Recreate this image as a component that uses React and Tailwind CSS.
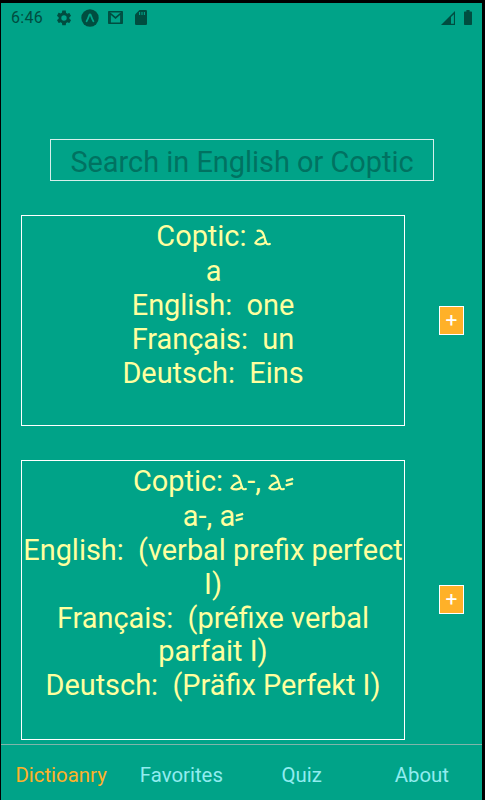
import React from 'react';
import clsx from 'clsx';

const entries = [
    {
        id: 1,
        coptic: ['a'],
        latin: 'a',
        english: 'one',
        french: 'un',
        german: 'Eins',
        height: 'h-[211px]',
    },
    {
        id: 2,
        coptic: ['a', '-, ', 'a', '='],
        latin: 'a-, a=',
        english: '(verbal prefix perfect I)',
        french: '(préfixe verbal parfait I)',
        german: '(Präfix Perfekt I)',
        height: 'h-[279.5px]',
    },
];

const tabs = ['Dictioanry', 'Favorites', 'Quiz', 'About'];

// Coptic small alfa
const Alfa = () => (
    <svg role="img" aria-label="ⲁ" viewBox="0 0 17 17" className="inline-block w-[17px] h-[17px] align-baseline" fill="none" stroke="currentColor" strokeWidth="2.2" strokeLinecap="round" strokeLinejoin="round">
        <path d="M3.6 1.8C7 1.2 8.8 3 9.8 6.3L11.8 13C12.4 15 13.8 15.8 15.8 14.9" />
        <path d="M10.1 7.8C6.5 8.8 3 10.8 1.4 14C4.5 16.3 9 15.8 11.8 13" />
    </svg>
);

// Double oblique hyphen
const ObliqueHyphen = () => (
    <svg role="img" aria-label="⸗" viewBox="0 0 9 17" className="inline-block w-[9px] h-[17px] align-baseline" fill="none" stroke="currentColor" strokeWidth="2.3">
        <path d="M1 6.9L8.2 4.9M.6 11.3L7.8 9.3" />
    </svg>
);

const Glyphs = ({ parts }) =>
    parts.map((part, i) => {
        if (part === 'a') return <Alfa key={i} />;
        if (part === '=') return <ObliqueHyphen key={i} />;
        return <span key={i}>{part}</span>;
    });

const StatusBar = () => (
    <div className="h-[30px] flex items-center justify-between pb-px pl-[10px] pr-[10px] text-[#004d40]">
        <div className="flex items-center">
            <span className="w-[44px] pt-px text-[16px] tracking-[0.3px]">6:46</span>
            <svg viewBox="0 0 24 24" className="w-[18px] h-[18px]" fill="currentColor">
                <path d="M19.14 12.94c.04-.3.06-.61.06-.94s-.02-.64-.07-.94l2.03-1.58a.49.49 0 0 0 .12-.61l-1.92-3.32a.49.49 0 0 0-.59-.22l-2.39.96a7 7 0 0 0-1.62-.94l-.36-2.54A.48.48 0 0 0 13.92 2h-3.84a.48.48 0 0 0-.47.41l-.36 2.54c-.59.24-1.13.57-1.62.94l-2.39-.96a.48.48 0 0 0-.59.22L2.74 8.87a.47.47 0 0 0 .12.61l2.03 1.58a7.3 7.3 0 0 0 0 1.88l-2.03 1.58a.49.49 0 0 0-.12.61l1.92 3.32c.12.22.37.29.59.22l2.39-.96c.5.38 1.03.7 1.62.94l.36 2.54c.05.24.24.41.48.41h3.84c.24 0 .44-.17.47-.41l.36-2.54c.59-.24 1.13-.56 1.62-.94l2.39.96c.22.08.47 0 .59-.22l1.92-3.32a.47.47 0 0 0-.12-.61zM12 15.6a3.6 3.6 0 1 1 0-7.2 3.6 3.6 0 0 1 0 7.2z" />
            </svg>
            <svg viewBox="0 0 18 18" className="w-[18px] h-[18px] ml-[7.5px]">
                <circle cx="9" cy="9" r="8.7" fill="currentColor" />
                <path d="M5.6 12.2C6.9 10.2 7.6 7.9 8.3 6Q9 4.8 9.7 6C10.4 7.9 11.1 10.2 12.4 12.2" fill="none" stroke="#00a388" strokeWidth="1.8" strokeLinecap="round" />
            </svg>
            <svg viewBox="0 0 15 13" className="w-[15px] h-[13px] ml-[9.5px]">
                <path d="M.8 12.2V.8H14.2V12.2Z" fill="none" stroke="currentColor" strokeWidth="1.5" strokeLinejoin="round" />
                <path d="M2 12V2.2L7.5 6.8L13 2.2V12" fill="none" stroke="currentColor" strokeWidth="1.7" />
            </svg>
            <svg viewBox="0 0 12 15" className="w-[12px] h-[15px] ml-[12px]">
                <path d="M4.5 0H10.7Q12 0 12 1.3V13.7Q12 15 10.7 15H1.3Q0 15 0 13.7V4.5Z" fill="currentColor" />
                <path d="M4.6 2V5M7 2V5M9.4 2V5" stroke="#00a388" strokeWidth="1.1" />
            </svg>
        </div>
        <div className="flex items-center gap-[9px]">
            <svg viewBox="0 0 14 14" className="w-[14px] h-[14px]">
                <path d="M0 14L14 0V14Z" fill="currentColor" />
                <path d="M10 6L12.9 3.2V12.8H10Z" fill="#00a388" />
            </svg>
            <svg viewBox="0 0 8 15" className="w-[8px] h-[15px]" fill="currentColor">
                <path d="M2.4 0H5.6V1.5H7.3Q8 1.5 8 2.2V14.3Q8 15 7.3 15H.7Q0 15 0 14.3V2.2Q0 1.5.7 1.5H2.4Z" />
            </svg>
        </div>
    </div>
);

const Entry = ({ entry }) => (
    <div className="flex items-center">
        <div className={clsx('w-[384px] shrink-0 border border-white pt-[4px] text-center text-[28.9px] leading-[33.75px] text-[#ffff9f]', entry.height)}>
            <p className="h-[35px] pl-px">
                Coptic: <Glyphs parts={entry.coptic} />
            </p>
            <p className="h-[34px] pl-px">
                {entry.latin.replace('=', '')}
                {entry.latin.endsWith('=') && <ObliqueHyphen />}
            </p>
            <p>{`English:\u00a0 ${entry.english}`}</p>
            <p>{`Français:\u00a0 ${entry.french}`}</p>
            <p>{`Deutsch:\u00a0 ${entry.german}`}</p>
        </div>
        <button className="ml-[34px] w-[25px] h-[29px] shrink-0 flex items-center justify-center border border-white bg-[#ffb128] text-white text-[21px] leading-none">
            +
        </button>
    </div>
);

const App = () => {
    return (
        <div className="w-[485px] h-[800px] overflow-hidden bg-black pt-[3px] pl-[1px] pr-[3px] font-['Roboto',sans-serif]">
            <div className="h-full flex flex-col bg-[#00a388]">
                <StatusBar />

                {/* Search */}
                <input
                    placeholder="Search in English or Coptic"
                    className="mt-[106px] ml-[49px] w-[384px] h-[42px] shrink-0 border border-[#d5efeb] bg-transparent text-center text-[28.9px] leading-[34px] pt-[3px] outline-none placeholder:text-[#007261]"
                />

                {/* Entries */}
                <div className="flex-1 min-h-0 pt-[34px] pl-[20px] flex flex-col gap-[34px]">
                    {entries.map((entry) => (
                        <Entry key={entry.id} entry={entry} />
                    ))}
                </div>

                {/* Bottom tabs */}
                <nav className="h-[56px] shrink-0 flex border-t border-[#7fb5aa] text-[20.4px]">
                    {tabs.map((tab, i) => (
                        <a key={tab} className={clsx('flex-1 pt-[17.5px] text-center leading-[24px]', i === 0 ? 'text-[#ffb128]' : 'text-[#91ecef]')}>
                            {tab}
                        </a>
                    ))}
                </nav>
            </div>
        </div>
    );
};

export default App;
